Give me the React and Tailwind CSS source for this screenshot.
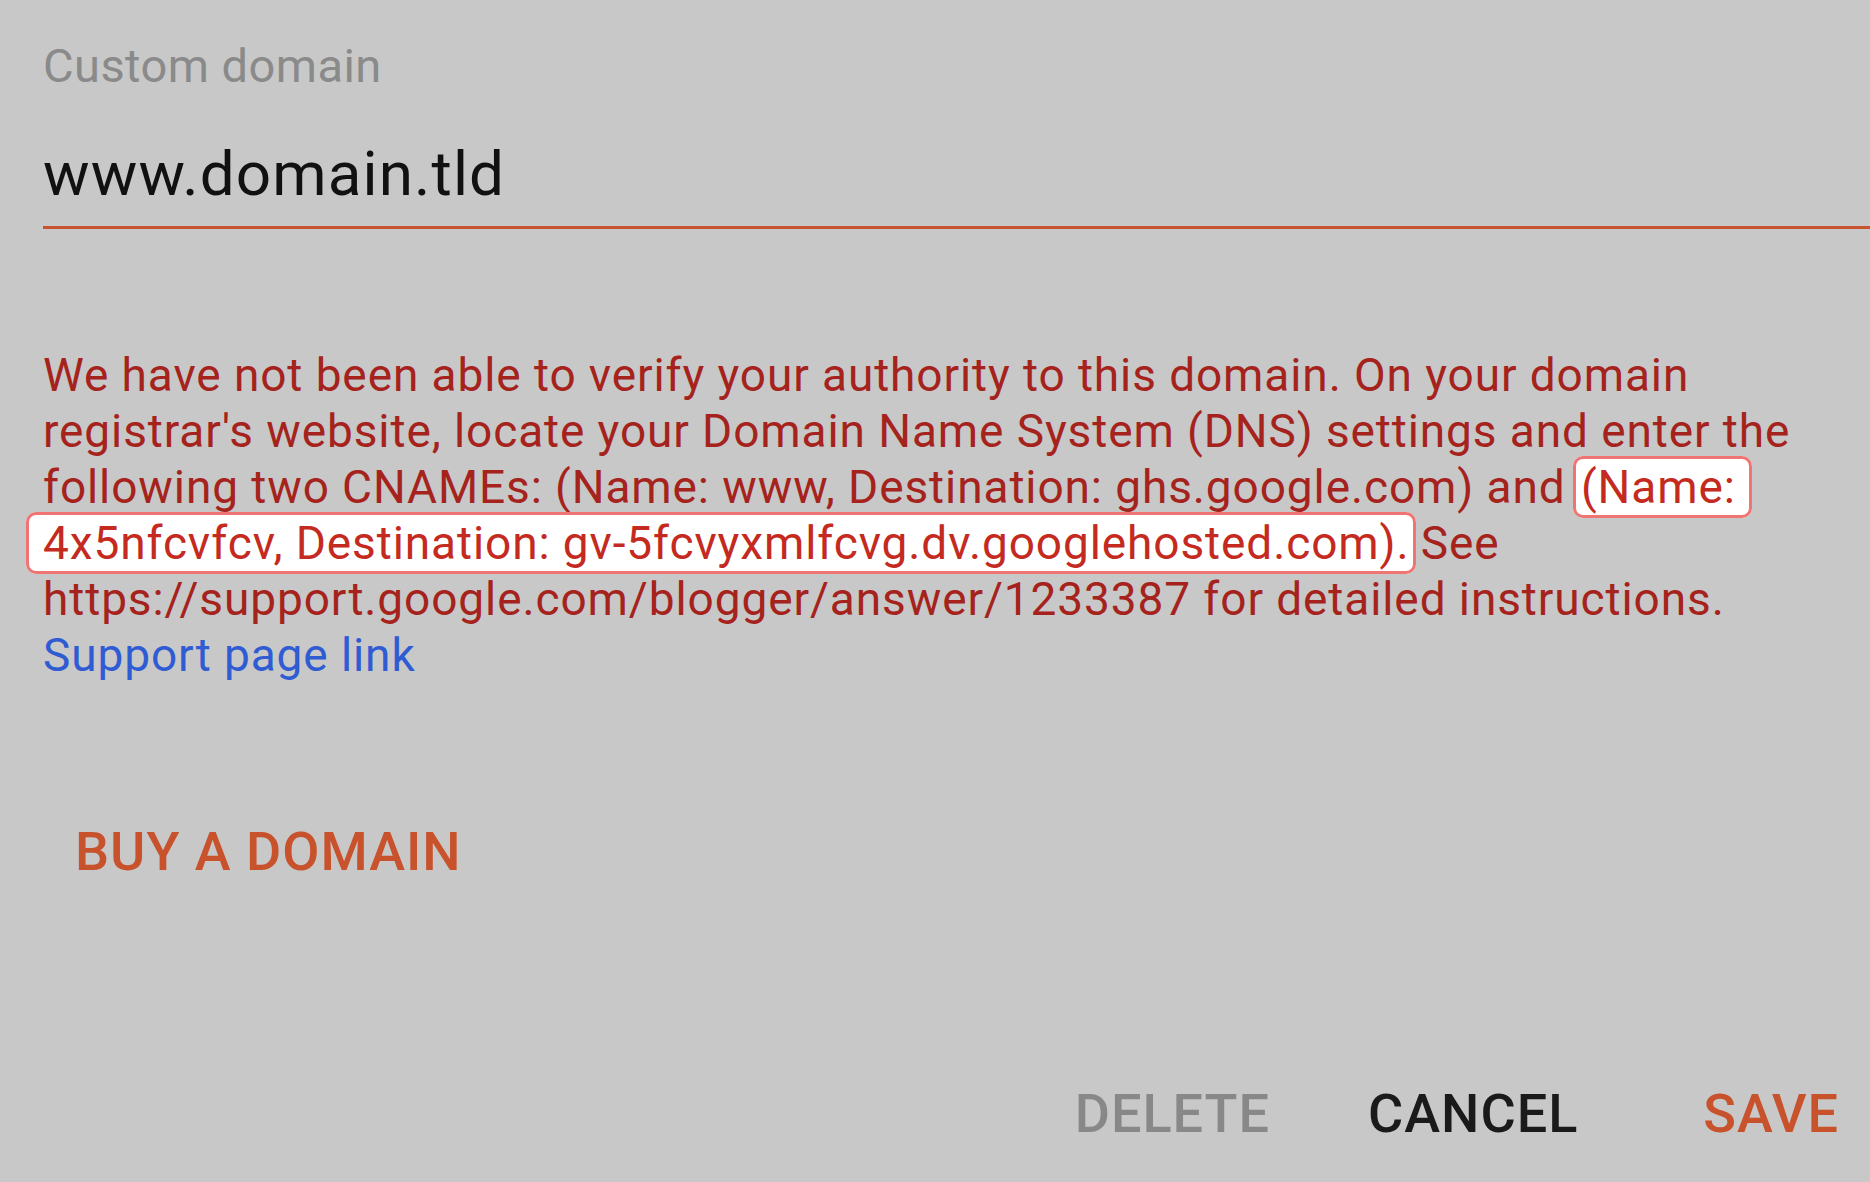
export default function App() {
  return (
    <div className="w-full h-[1182px] bg-[#c8c8c8] font-['Roboto',sans-serif] flex flex-col overflow-hidden">
      {/* Field */}
      <div className="pl-[43px] pt-[38px]">
        <div className="text-[47px] leading-[56px] tracking-[0.45px] text-[#8a8a8a]">Custom domain</div>
        <div className="mt-[44px] pb-[16px] border-b-[3px] border-[#c9532f]">
          <div className="text-[62px] leading-[72px] tracking-[1.1px] text-[#111111]">www.domain.tld</div>
        </div>
      </div>

      {/* Error message */}
      <div className="pl-[43px] mt-[118px] text-[46px] leading-[56px] tracking-[0.9px] text-[#a5231c] whitespace-nowrap">
        We have not been able to verify your authority to this domain. On your domain
        <br />
        registrar's website, locate your Domain Name System (DNS) settings and enter the
        <br />
        following two CNAMEs: (Name: www, Destination: ghs.google.com) and{' '}
        <span className="-ml-[5px] bg-white border-[3px] border-[#f07474] rounded-[10px] py-[1px] pl-[5px] pr-[13px] text-[#c52a20]">
          (Name:
        </span>
        <br />
        <span className="-ml-[17px] -mr-[8px] bg-white border-[3px] border-[#f07474] rounded-[10px] py-[1px] pl-[14px] pr-[4px] text-[#c52a20]">
          4x5nfcvfcv, Destination: gv-5fcvyxmlfcvg.dv.googlehosted.com).
        </span>{' '}
        See
        <br />
        https://support.google.com/blogger/answer/1233387 for detailed instructions.
        <br />
        <a className="text-[#2f5bd3]">Support page link</a>
      </div>

      {/* Buy a domain */}
      <div className="pl-[75px] mt-[137px]">
        <button className="text-[54px] leading-[64px] tracking-[1px] font-medium text-[#c8522c]">BUY A DOMAIN</button>
      </div>

      {/* Actions */}
      <div className="mt-auto pb-[36px] pr-[31px] flex justify-end items-center gap-[98px] text-[54px] leading-[64px] tracking-[1px] font-medium">
        <button className="text-[#888888]">DELETE</button>
        <button className="text-[#1a1a1a] mr-[27px]">CANCEL</button>
        <button className="text-[#c8522c]">SAVE</button>
      </div>
    </div>
  );
}
